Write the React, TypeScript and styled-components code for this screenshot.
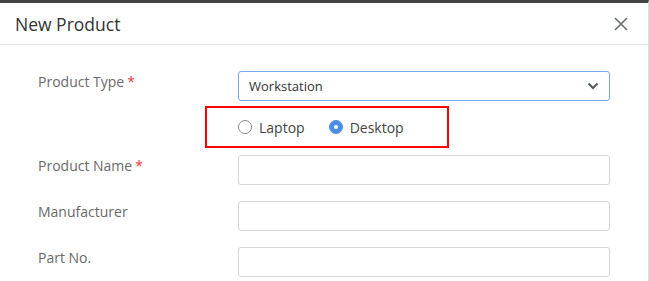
import React from 'react';
import styled, { createGlobalStyle } from 'styled-components';

const GlobalStyle = createGlobalStyle`
	html, body {
		margin: 0;
		padding: 0;
		background: #fff;
	}
	body {
		font-family: 'Open Sans', 'Noto Sans', sans-serif;
	}
`;

const Dialog = styled.div`
	width: 648px;
	height: 278px;
	border-top: 3px solid #444;
	border-right: 1px solid #dcdcdc;
	background: #fff;
	overflow: hidden;
`;

const Header = styled.div`
	height: 41px;
	display: flex;
	align-items: center;
	justify-content: space-between;
	padding: 0 19px 0 15px;
	border-bottom: 1px solid #e5e5e5;
`;

const Title = styled.h2`
	margin: 0;
	font-size: 17.5px;
	font-weight: 400;
	color: #333;
`;

const CloseButton = styled.button`
	border: 0;
	background: none;
	padding: 0;
	width: 16px;
	height: 16px;
	display: flex;
	align-items: center;
	justify-content: center;
	cursor: pointer;
`;

const Form = styled.div`
	padding: 26px 0 0 38px;
	display: flex;
	flex-direction: column;
`;

const Row = styled.div<{ $gap?: number }>`
	display: grid;
	grid-template-columns: 200px 372px;
	margin-bottom: ${({ $gap }) => $gap ?? 16}px;
`;

const Label = styled.label`
	font-size: 14px;
	color: #6a6a6a;
	padding-top: 1px;
	line-height: 19px;
`;

const Required = styled.span`
	color: #e8363a;
	margin-left: 3px;
`;

const Input = styled.div<{ $focused?: boolean }>`
	height: 30px;
	box-sizing: border-box;
	border: 1px solid ${({ $focused }) => ($focused ? '#7aa8ea' : '#d6d6d6')};
	border-radius: 3px;
	display: flex;
	align-items: center;
	justify-content: space-between;
	padding: 0 10px 0 10px;
	font-size: 13px;
	color: #333;
`;

const Annotation = styled.div`
	grid-column: 2;
	margin-left: -33px;
	width: 244px;
	height: 42px;
	box-sizing: border-box;
	border: 2px solid #f00;
	display: flex;
	align-items: center;
	gap: 24px;
	padding-left: 31px;
`;

const RadioOption = styled.span`
	display: flex;
	align-items: center;
	gap: 7px;
	font-size: 14px;
	color: #444;
`;

const RadioCircle = styled.span<{ $checked?: boolean }>`
	width: 14px;
	height: 14px;
	box-sizing: border-box;
	border-radius: 50%;
	border: 1px solid ${({ $checked }) => ($checked ? '#4a8fe3' : '#8a8a8a')};
	background: ${({ $checked }) => ($checked ? '#4a8fe3' : '#fff')};
	display: flex;
	align-items: center;
	justify-content: center;
	&::after {
		content: '';
		width: 4px;
		height: 4px;
		border-radius: 50%;
		background: #fff;
		display: ${({ $checked }) => ($checked ? 'block' : 'none')};
	}
`;

function Radio({ label, checked }: { label: string; checked?: boolean }) {
	return (
		<RadioOption>
			<RadioCircle $checked={checked} />
			{label}
		</RadioOption>
	);
}

export default function App() {
	return (
		<>
			<GlobalStyle />
			<Dialog>
				<Header>
					<Title>New Product</Title>
					<CloseButton aria-label="Close">
						<svg width="14" height="14" viewBox="0 0 14 14">
							<path d="M1 1L13 13M13 1L1 13" stroke="#6b6e73" strokeWidth="1.6" fill="none" />
						</svg>
					</CloseButton>
				</Header>
				<Form>
					<Row $gap={5}>
						<Label>
							Product Type<Required>*</Required>
						</Label>
						<Input $focused>
							Workstation
							<svg width="12" height="8" viewBox="0 0 12 8">
								<path d="M1.5 1.5L6 6L10.5 1.5" stroke="#555a60" strokeWidth="2" fill="none" />
							</svg>
						</Input>
					</Row>
					<Row $gap={7}>
						<Annotation>
							<Radio label="Laptop" />
							<Radio label="Desktop" checked />
						</Annotation>
					</Row>
					<Row>
						<Label>
							Product Name<Required>*</Required>
						</Label>
						<Input />
					</Row>
					<Row>
						<Label>Manufacturer</Label>
						<Input />
					</Row>
					<Row>
						<Label>Part No.</Label>
						<Input />
					</Row>
				</Form>
			</Dialog>
		</>
	);
}
